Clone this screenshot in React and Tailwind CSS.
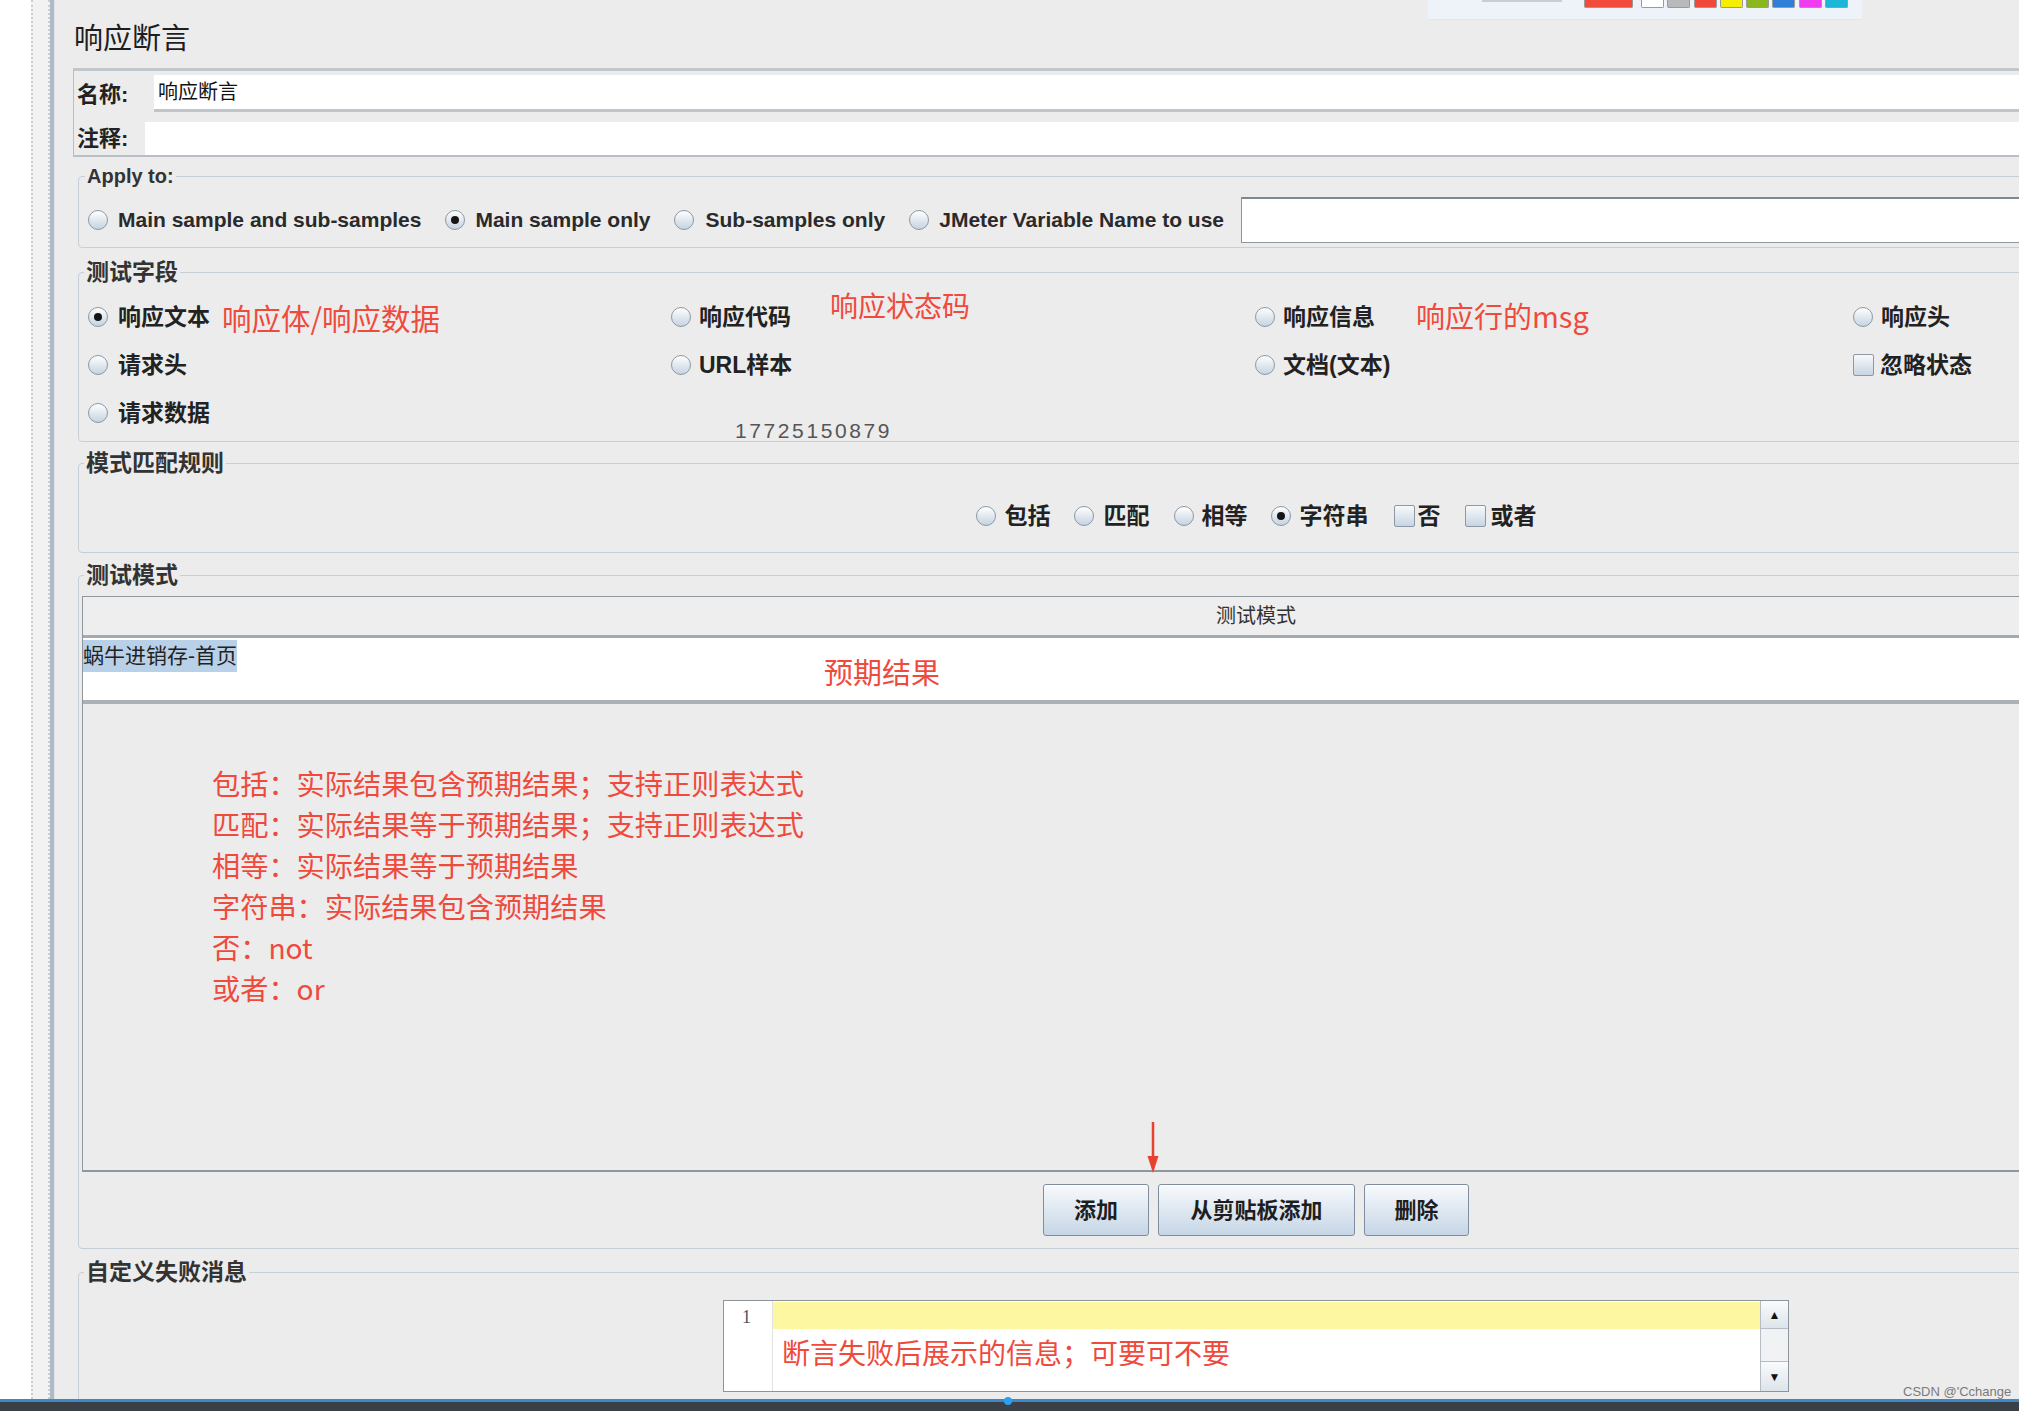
import React from "react";

function Radio({ checked }) {
  return (
    <span className="w-[20px] h-[20px] shrink-0 rounded-full border border-[#8c98a4] bg-linear-to-b from-[#ffffff] to-[#c5d3e1] flex items-center justify-center">
      {checked && <span className="w-[8px] h-[8px] rounded-full bg-[#161616]" />}
    </span>
  );
}

function Check() {
  return (
    <span className="block w-[21px] h-[22px] shrink-0 rounded-[2px] border border-[#8c98a4] bg-linear-to-b from-[#f7f9fb] to-[#c8d5e2]" />
  );
}

function Lbl({ children, cls = "" }) {
  return (
    <span className={"text-[23px] leading-[28px] font-bold text-[#222222] whitespace-nowrap " + cls}>
      {children}
    </span>
  );
}

function Red({ children, cls = "" }) {
  return (
    <span className={"font-['Noto_Sans_CJK_SC','Noto_Sans',sans-serif] font-normal text-[#ef4a3c] whitespace-nowrap " + cls}>
      {children}
    </span>
  );
}

function Btn({ children, w }) {
  return (
    <div
      className={
        "h-[52px] rounded-[3px] border border-[#7e8e9e] bg-linear-to-b from-[#f8fafc] to-[#c6d6e6] flex items-center justify-center text-[22px] font-bold text-[#1e1e1e] shadow-[inset_0_1px_0_#ffffff] " +
        w
      }
    >
      {children}
    </div>
  );
}

export default function App() {
  const lines = [
    "包括：实际结果包含预期结果；支持正则表达式",
    "匹配：实际结果等于预期结果；支持正则表达式",
    "相等：实际结果等于预期结果",
    "字符串：实际结果包含预期结果",
    "否：not",
    "或者：or",
  ];
  const swatches = [
    "bg-[#ffffff]",
    "bg-[#b9b9b9]",
    "bg-[#f0483a]",
    "bg-[#f6ee00]",
    "bg-[#8ab81c]",
    "bg-[#2f7fd6]",
    "bg-[#ef3cef]",
    "bg-[#1cb6d6]",
  ];

  return (
    <div className="relative w-[2019px] h-[1411px] overflow-hidden bg-[#ececec] flex flex-col font-['Liberation_Sans','Noto_Sans_CJK_SC',sans-serif] text-[#222222]">
      <div className="flex-1 min-h-0 flex overflow-hidden">
        {/* left strips */}
        <div className="w-[31px] shrink-0 bg-white" />
        <div className="w-[19px] shrink-0 bg-[#f2f2f2] border-x-2 border-dotted border-[#c9cdd1]" />
        <div className="w-[5px] shrink-0 bg-[#aebbc7] border-r border-[#dde3e8]" />

        {/* content */}
        <div className="flex-1 min-w-0 overflow-hidden">
          <div className="w-[2400px]">
            <div className="pl-[19px] pt-[21px] h-[57px] text-[29px] leading-[36px] text-[#1e1e1e]">
              响应断言
            </div>

            {/* name / comment */}
            <div className="ml-[18px] mt-[11px] border-l border-[#b9bfc5] border-t-[3px] border-t-[#c2c7cc] border-b-2 border-b-[#b9bfc5]">
              <div className="flex h-[41px]">
                <div className="w-[80px] pl-[3px] pt-[6px] flex items-center text-[22px] font-bold">名称:</div>
                <div className="flex-1 mt-[4px] h-[37px] bg-white border-b-[3px] border-[#c0c5ca] flex items-center pl-[4px] text-[20px] text-[#111]">
                  响应断言
                </div>
              </div>
              <div className="flex h-[43px]">
                <div className="w-[71px] pl-[3px] pt-[10px] flex items-center text-[22px] font-bold">注释:</div>
                <div className="flex-1 mt-[10px] bg-white" />
              </div>
            </div>

            {/* Apply to */}
            <fieldset className="ml-[23px] mr-[21px] mt-[7px] border border-[#c6cfd8] rounded-[4px] pl-[9px] pb-[4px]">
              <legend className="-ml-[3px] px-[2px] text-[20px] leading-[24px] font-bold text-[#333]">Apply to:</legend>
              <div className="mt-[9px] h-[46px] flex items-center">
                <Radio />
                <span className="ml-[10px] text-[21px] font-bold text-[#2a2a2a] whitespace-nowrap">Main sample and sub-samples</span>
                <span className="ml-[24px]"><Radio checked /></span>
                <span className="ml-[10px] text-[21px] font-bold text-[#2a2a2a] whitespace-nowrap">Main sample only</span>
                <span className="ml-[24px]"><Radio /></span>
                <span className="ml-[11px] text-[21px] font-bold text-[#2a2a2a] whitespace-nowrap">Sub-samples only</span>
                <span className="ml-[24px]"><Radio /></span>
                <span className="ml-[10px] text-[21px] font-bold text-[#2a2a2a] whitespace-nowrap">JMeter Variable Name to use</span>
                <div className="ml-[17px] flex-1 h-[46px] bg-white border border-[#8e959b] border-t-2 border-t-[#7f878e]" />
              </div>
            </fieldset>

            {/* 测试字段 */}
            <fieldset className="ml-[23px] mr-[21px] mt-[10px] border border-[#c6cfd8] rounded-[4px] pl-[9px] pb-[4px]">
              <legend className="-ml-[4px] px-[2px] text-[23px] leading-[28px] font-bold text-[#333]">测试字段</legend>
              <div className="pt-[7px] grid grid-cols-[583px_584px_598px_1fr] grid-rows-[48px_48px_48px]">
                <div className="flex items-center">
                  <Radio checked />
                  <Lbl cls="ml-[10px]">响应文本</Lbl>
                  <Red cls="ml-[12px] text-[29.5px] leading-[36px]">响应体/响应数据</Red>
                </div>
                <div className="flex items-center">
                  <Radio />
                  <Lbl cls="ml-[8px]">响应代码</Lbl>
                  <Red cls="ml-[39px] mb-[24px] text-[28px] leading-[34px]">响应状态码</Red>
                </div>
                <div className="flex items-center">
                  <Radio />
                  <Lbl cls="ml-[8px]">响应信息</Lbl>
                  <Red cls="ml-[41px] mb-[4px] text-[29px] leading-[36px]">响应行的msg</Red>
                </div>
                <div className="flex items-center">
                  <Radio />
                  <Lbl cls="ml-[8px]">响应头</Lbl>
                </div>

                <div className="flex items-center">
                  <Radio />
                  <Lbl cls="ml-[10px]">请求头</Lbl>
                </div>
                <div className="flex items-center">
                  <Radio />
                  <Lbl cls="ml-[8px]">URL样本</Lbl>
                </div>
                <div className="flex items-center">
                  <Radio />
                  <Lbl cls="ml-[8px]">文档(文本)</Lbl>
                </div>
                <div className="flex items-center">
                  <Check />
                  <Lbl cls="ml-[6px]">忽略状态</Lbl>
                </div>

                <div className="flex items-center">
                  <Radio />
                  <Lbl cls="ml-[10px]">请求数据</Lbl>
                </div>
              </div>
            </fieldset>

            {/* 模式匹配规则 */}
            <fieldset className="ml-[23px] mr-[21px] mt-[7px] border border-[#c6cfd8] rounded-[4px] px-[3px] pb-[16px]">
              <legend className="ml-[2px] px-[2px] text-[23px] leading-[28px] font-bold text-[#333]">模式匹配规则</legend>
              <div className="pt-[19px] h-[59px] flex items-center justify-center">
                <Radio />
                <Lbl cls="ml-[9px]">包括</Lbl>
                <span className="ml-[23px]"><Radio /></span>
                <Lbl cls="ml-[10px]">匹配</Lbl>
                <span className="ml-[24px]"><Radio /></span>
                <Lbl cls="ml-[8px]">相等</Lbl>
                <span className="ml-[23px]"><Radio checked /></span>
                <Lbl cls="ml-[9px]">字符串</Lbl>
                <span className="ml-[25px]"><Check /></span>
                <Lbl cls="ml-[3px]">否</Lbl>
                <span className="ml-[24px]"><Check /></span>
                <Lbl cls="ml-[5px]">或者</Lbl>
              </div>
            </fieldset>

            {/* 测试模式 */}
            <fieldset className="ml-[23px] mr-[21px] mt-[8px] border border-[#c6cfd8] rounded-[4px] px-[3px] pb-[12px]">
              <legend className="ml-[2px] px-[2px] text-[23px] leading-[28px] font-bold text-[#333]">测试模式</legend>
              <div className="mt-[7px] h-[576px] border border-[#8f979e] border-b-2 flex flex-col">
                <div className="h-[41px] shrink-0 bg-[#eeeeee] border-b-[3px] border-[#a3aab1] flex items-center justify-center text-[20px] text-[#333]">
                  测试模式
                </div>
                <div className="h-[66px] shrink-0 bg-white border-b-[4px] border-[#aab1b7] flex items-start">
                  <span className="mt-[2px] bg-[#b8d0e8] text-[21px] leading-[32px] text-[#222] whitespace-nowrap">蜗牛进销存-首页</span>
                  <Red cls="ml-[587px] mt-[15px] text-[29px] leading-[36px]">预期结果</Red>
                </div>
                <div className="flex-1 pl-[129px] pt-[58px] flex flex-col">
                  {lines.map((t) => (
                    <Red key={t} cls="text-[28.2px] leading-[41px]">{t}</Red>
                  ))}
                </div>
              </div>
              <div className="mt-[12px] flex justify-center gap-[9px]">
                <Btn w="w-[106px]">添加</Btn>
                <Btn w="w-[197px]">从剪贴板添加</Btn>
                <Btn w="w-[105px]">删除</Btn>
              </div>
            </fieldset>

            {/* 自定义失败消息 */}
            <fieldset className="ml-[23px] mr-[21px] mt-[9px] border border-[#c6cfd8] rounded-[4px] px-[3px] pb-[20px]">
              <legend className="ml-[2px] px-[2px] text-[23px] leading-[28px] font-bold text-[#333]">自定义失败消息</legend>
              <div className="mt-[14px] flex justify-center">
                <div className="w-[1066px] h-[92px] bg-white border border-[#8d959c] flex">
                  <div className="w-[49px] shrink-0 border-r border-[#e2e2e2] pl-[18px] pt-[3px] font-['Liberation_Serif',serif] text-[18px] text-[#555]">
                    1
                  </div>
                  <div className="flex-1 flex flex-col">
                    <div className="mt-[1px] h-[27px] bg-[#fdf7a2]" />
                    <Red cls="pl-[9px] mt-[5px] text-[28px] leading-[36px]">断言失败后展示的信息；可要可不要</Red>
                  </div>
                  <div className="w-[28px] shrink-0 border-l border-[#b5bcc3] flex flex-col bg-[#f0f2f4]">
                    <div className="h-[28px] border-b border-[#b5bcc3] bg-linear-to-b from-[#fafbfc] to-[#dde4ea] flex items-center justify-center text-[12px] text-[#111]">▲</div>
                    <div className="flex-1" />
                    <div className="h-[30px] border-t border-[#b5bcc3] bg-linear-to-b from-[#fafbfc] to-[#dde4ea] flex items-center justify-center text-[12px] text-[#111]">▼</div>
                  </div>
                </div>
              </div>
            </fieldset>
          </div>
        </div>
      </div>

      {/* bottom progress bar */}
      <div className="relative h-[12px] shrink-0 border-t-[3px] border-[#3d88c8] bg-[#3b4046]">
        <span className="absolute left-[1004px] -top-[5px] w-[8px] h-[8px] rounded-full bg-[#2aa0f5]" />
      </div>

      {/* top toolbar fragment */}
      <div className="absolute left-[1428px] top-0 w-[434px] h-[20px] bg-[#eef3f9] border-b border-[#e2e7ec] flex items-start">
        <span className="ml-[54px] w-[80px] h-[2px] bg-[#c9ced3]" />
        <span className="ml-[22px] w-[49px] h-[8px] bg-[#f24b3b] border border-[#9a9a9a] border-t-0 rounded-b-[2px]" />
        <div className="ml-[8px] flex gap-[3.3px]">
          {swatches.map((c) => (
            <span key={c} className={"w-[23px] h-[8px] border border-[#9a9a9a] border-t-0 rounded-b-[2px] " + c} />
          ))}
        </div>
      </div>

      {/* watermark number */}
      <div className="absolute left-[735px] top-[419px] text-[21px] leading-[24px] tracking-[2.6px] text-[#555555]">
        17725150879
      </div>

      {/* red arrow */}
      <svg className="absolute left-[1146px] top-[1122px]" width="14" height="51" viewBox="0 0 14 51">
        <line x1="7" y1="0" x2="7" y2="38" stroke="#e8402e" strokeWidth="2.5" />
        <polygon points="1.5,34 12.5,34 7,51" fill="#e8402e" />
      </svg>

      {/* CSDN watermark */}
      <div className="absolute left-[1903px] top-[1385px] text-[13px] leading-[14px] text-[#7a7a7a]">
        CSDN @'Cchange
      </div>
    </div>
  );
}
